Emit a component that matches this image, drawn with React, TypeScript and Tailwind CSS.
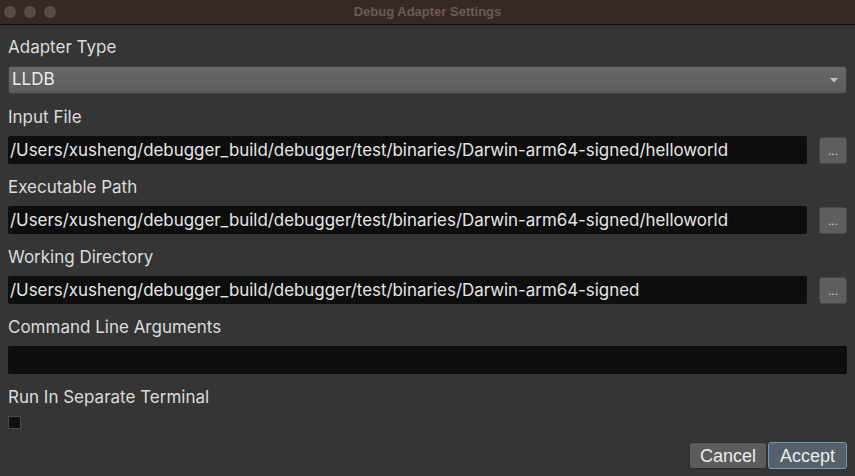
import React from "react";

const PATH = "/Users/xusheng/debugger_build/debugger/test/binaries/Darwin-arm64-signed";

const Label: React.FC<{ text: string }> = ({ text }) => (
  <div className="h-[24px] leading-[26px] text-[17px] text-[#dcdcdc]">{text}</div>
);

const PathField: React.FC<{ value: string; browse?: boolean }> = ({ value, browse = true }) => (
  <div className="mt-[8px] flex items-center gap-[12px]">
    <div className="h-[28px] flex-1 rounded-[2px] bg-[#0e0e0e] px-[2px] text-[16.9px] leading-[28px] text-[#e6e6e6] whitespace-nowrap overflow-hidden">
      {value}
    </div>
    {browse && (
      <button className="h-[27px] w-[28px] rounded-[3px] border border-[#484848] bg-[#5e5e5e] text-[12px] leading-[26px] text-[#d8d8d8] font-['Liberation_Sans',sans-serif]">
        ...
      </button>
    )}
  </div>
);

export default function App() {
  return (
    <div className="w-[855px] h-[476px] bg-[#353535] font-['Inter',sans-serif] flex flex-col overflow-hidden">
      <div className="h-[25px] shrink-0 bg-[#382825] border-b border-[#0d0d0d] flex items-center relative">
        <div className="flex gap-[8px] pl-[4px]">
          <span className="w-[12px] h-[12px] rounded-full bg-[#5c4c49]" />
          <span className="w-[12px] h-[12px] rounded-full bg-[#5c4c49]" />
          <span className="w-[12px] h-[12px] rounded-full bg-[#5c4c49]" />
        </div>
        <div className="absolute inset-0 flex items-center justify-center text-[13px] font-bold text-[#6a5c59] font-['Liberation_Sans',sans-serif]">
          Debug Adapter Settings
        </div>
      </div>

      <div className="flex-1 flex flex-col px-[8px] pt-[9px]">
        <Label text="Adapter Type" />
        <div className="mt-[8px] h-[28px] rounded-[3px] border border-[#3e3e3e] bg-gradient-to-b from-[#686868] to-[#5b5b5b] flex items-center justify-between px-[3px]">
          <span className="text-[17px] text-[#ececec]">LLDB</span>
          <svg width="8" height="5" viewBox="0 0 8 5" className="mr-[5px]">
            <path d="M0 0 H8 L4 4.5 Z" fill="#c4c4c4" />
          </svg>
        </div>

        <div className="mt-[10px]">
          <Label text="Input File" />
          <PathField value={PATH + "/helloworld"} />
        </div>
        <div className="mt-[10px]">
          <Label text="Executable Path" />
          <PathField value={PATH + "/helloworld"} />
        </div>
        <div className="mt-[10px]">
          <Label text="Working Directory" />
          <PathField value={PATH} />
        </div>
        <div className="mt-[10px]">
          <Label text="Command Line Arguments" />
          <PathField value="" browse={false} />
        </div>
        <div className="mt-[10px]">
          <Label text="Run In Separate Terminal" />
          <div className="mt-[8px] w-[13px] h-[13px] border border-[#4a4a4a] bg-[#111111]" />
        </div>

        <div className="mt-auto mb-[7px] flex justify-end gap-[1px] font-['Liberation_Sans',sans-serif]">
          <button className="h-[27px] w-[78px] rounded-[3px] border border-[#2c2c2c] bg-[#5c5c5c] text-[18px] text-[#ececec]">
            Cancel
          </button>
          <button className="h-[27px] w-[79px] rounded-[3px] border border-[#6f9bb4] bg-[#56606a] text-[18px] text-[#ececec]">
            Accept
          </button>
        </div>
      </div>
    </div>
  );
}
